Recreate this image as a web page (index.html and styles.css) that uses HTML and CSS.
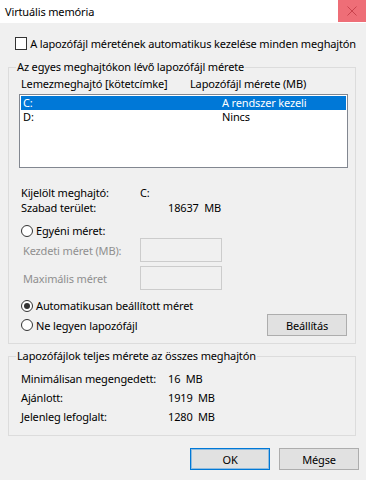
FILE: index.html
```html
<!DOCTYPE html>
<html lang="hu">
<head>
  <meta charset="UTF-8">
  <title>Virtuális memória</title>
  <link rel="stylesheet" href="styles.css">
</head>
<body>
  <div class="titlebar">
    <span class="title">Virtuális memória</span>
    <span class="close">
      <svg width="10" height="10" viewBox="0 0 10 10"><path d="M0.5 0.5 L9.5 9.5 M9.5 0.5 L0.5 9.5" stroke="#c9434d" stroke-width="1" fill="none"/></svg>
    </span>
  </div>

  <div class="content">
    <div class="check-row">
      <span class="checkbox"></span>
      <span>A lapozófájl méretének automatikus kezelése minden meghajtón</span>
    </div>

    <fieldset class="group drives">
      <legend>Az egyes meghajtókon lévő lapozófájl mérete</legend>
      <div class="list-head">
        <span class="col-drive">Lemezmeghajtó [kötetcímke]</span>
        <span>Lapozófájl mérete (MB)</span>
      </div>
      <div class="listbox">
        <div class="list-row selected"><span class="col-drive">C:</span><span>A rendszer kezeli</span></div>
        <div class="list-row"><span class="col-drive">D:</span><span>Nincs</span></div>
      </div>

      <div class="info">
        <div class="info-row"><span class="key">Kijelölt meghajtó:</span><span>C:</span></div>
        <div class="info-row"><span class="key">Szabad terület:</span><span class="num">18637  MB</span></div>
      </div>

      <div class="radio-row custom"><span class="radio"></span><span>Egyéni méret:</span></div>
      <div class="size-row">
        <span class="size-label">Kezdeti méret (MB):</span>
        <span class="textbox"></span>
      </div>
      <div class="size-row second">
        <span class="size-label">Maximális méret</span>
        <span class="textbox"></span>
      </div>

      <div class="radio-row auto"><span class="radio checked"></span><span>Automatikusan beállított méret</span></div>
      <div class="last-row">
        <div class="radio-row"><span class="radio"></span><span>Ne legyen lapozófájl</span></div>
        <button class="btn set">Beállítás</button>
      </div>
    </fieldset>

    <fieldset class="group totals">
      <legend>Lapozófájlok teljes mérete az összes meghajtón</legend>
      <div class="total-row"><span class="key">Minimálisan megengedett:</span><span class="num">16  MB</span></div>
      <div class="total-row"><span class="key">Ajánlott:</span><span class="num">1919  MB</span></div>
      <div class="total-row"><span class="key">Jelenleg lefoglalt:</span><span class="num">1280  MB</span></div>
    </fieldset>

    <div class="actions">
      <button class="btn default">OK</button>
      <button class="btn">Mégse</button>
    </div>
  </div>
</body>
</html>
```

FILE: styles.css
```css
* {
  box-sizing: border-box;
}
body {
  margin: 0;
  width: 366px;
  height: 480px;
  background: #f0f0f0;
  font-family: 'Noto Sans', 'Segoe UI', sans-serif;
  font-size: 11px;
  letter-spacing: -0.15px;
  color: #000;
  overflow: hidden;
  white-space: nowrap;
}
.titlebar {
  height: 23px;
  background: #fff;
  display: flex;
  justify-content: space-between;
  align-items: center;
}
.title {
  padding-left: 5px;
  line-height: 16px;
}
.close {
  width: 28px;
  height: 22px;
  align-self: flex-start;
  background: #ee6e77;
  display: flex;
  align-items: center;
  justify-content: center;
}
.content {
  padding: 0 10px 0 8px;
}
.check-row {
  display: flex;
  align-items: center;
  gap: 3px;
  height: 16px;
  margin-top: 12px;
  padding-left: 7px;
}
.checkbox {
  width: 13px;
  height: 13px;
  border: 1px solid #333;
  background: #fff;
}
.group {
  margin: 0;
  border: 1px solid #dcdcdc;
  min-width: 0;
}
.group legend {
  padding: 0 1px;
  margin-left: -3px;
  line-height: 16px;
}
.drives {
  margin-top: 8px;
  padding: 1px 7px 7px 10px;
}
.list-head {
  display: flex;
  height: 16px;
  line-height: 16px;
  padding-left: 2px;
}
.list-head .col-drive {
  width: 169px;
}
.listbox {
  margin-top: 2px;
  height: 74px;
  background: #fff;
  border: 1px solid #828790;
  padding: 1px;
}
.list-row {
  display: flex;
  height: 14px;
  line-height: 14px;
  padding-left: 2px;
}
.list-row .col-drive {
  width: 199px;
}
.list-row.selected {
  background: #0078d7;
  color: #fff;
}
.info {
  margin-top: 17px;
}
.info-row {
  display: flex;
  height: 15px;
  line-height: 15px;
  padding-left: 2px;
}
.info-row .key {
  width: 119px;
}
.info-row .num {
  padding-left: 28px;
}
.num {
  white-space: pre;
}
.radio-row {
  display: flex;
  align-items: center;
  gap: 3px;
  height: 15px;
  padding-left: 2px;
}
.radio-row.custom {
  margin-top: 8px;
}
.radio-row.auto {
  margin-top: 8px;
}
.radio {
  width: 12px;
  height: 12px;
  border: 1px solid #333;
  border-radius: 50%;
  background: #fff;
  display: flex;
  align-items: center;
  justify-content: center;
}
.radio.checked::after {
  content: "";
  width: 6px;
  height: 6px;
  border-radius: 50%;
  background: #333;
}
.size-row {
  display: flex;
  align-items: center;
  height: 24px;
  padding-left: 4px;
}
.size-row.second {
  margin-top: 4px;
}
.size-label {
  width: 117px;
  color: #8f8f8f;
}
.textbox {
  width: 82px;
  height: 24px;
  border: 1px solid #cccccc;
  background: #f0f0f0;
}
.last-row {
  display: flex;
  justify-content: space-between;
  align-items: center;
  margin-top: 1px;
  padding-right: 1px;
}
.btn {
  width: 80px;
  height: 22px;
  padding: 0;
  background: #e1e1e1;
  border: 1px solid #adadad;
  font-family: inherit;
  font-size: 11px;
  letter-spacing: -0.15px;
  color: #000;
}
.btn.default {
  border-color: #0078d7;
  box-shadow: inset 0 0 0 1px rgba(0, 120, 215, 0.35);
}
.totals {
  margin-top: 4px;
  padding: 5px 7px 9px 10px;
}
.total-row {
  display: flex;
  height: 19px;
  line-height: 19px;
  padding-left: 2px;
}
.total-row .key {
  width: 147px;
}
.actions {
  display: flex;
  justify-content: flex-end;
  gap: 9px;
  margin-top: 12px;
  margin-right: -3px;
}
```
